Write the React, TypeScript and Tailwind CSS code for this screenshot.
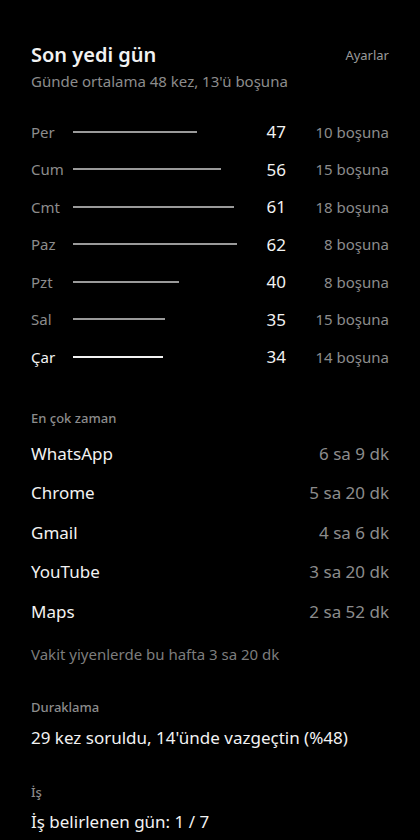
const days = [
  { day: "Per", count: 47, wasted: 10 },
  { day: "Cum", count: 56, wasted: 15 },
  { day: "Cmt", count: 61, wasted: 18 },
  { day: "Paz", count: 62, wasted: 8 },
  { day: "Pzt", count: 40, wasted: 8 },
  { day: "Sal", count: 35, wasted: 15 },
  { day: "Çar", count: 34, wasted: 14, today: true },
];

const apps = [
  { name: "WhatsApp", time: "6 sa 9 dk" },
  { name: "Chrome", time: "5 sa 20 dk" },
  { name: "Gmail", time: "4 sa 6 dk" },
  { name: "YouTube", time: "3 sa 20 dk" },
  { name: "Maps", time: "2 sa 52 dk" },
];

export default function App() {
  return (
    <div
      className="min-h-[840px] w-[420px] bg-black px-[31px] pt-[44px] pb-10 text-[#f2f2f2]"
      style={{ fontFamily: '"Noto Sans", "Open Sans", sans-serif' }}
    >
      <div className="flex items-center justify-between">
        <h1 className="text-[20px] leading-[22px] font-semibold">Son yedi gün</h1>
        <button type="button" className="text-[13px] leading-[22px] text-[#9a9a9a]">
          Ayarlar
        </button>
      </div>
      <p className="mt-[5px] text-[15px] leading-[20px] text-[#8c8c8c]">
        Günde ortalama 48 kez, 13'ü boşuna
      </p>

      <div className="mt-[22px]">
        {days.map((d) => (
          <div key={d.day} className="flex h-[37.5px] items-center">
            <span
              className={`w-[42px] text-[15px] ${d.today ? "text-[#f2f2f2]" : "text-[#8c8c8c]"}`}
            >
              {d.day}
            </span>
            <div className="flex-1">
              <div
                className={`h-[2px] ${d.today ? "bg-[#f2f2f2]" : "bg-[#9a9a9a]"}`}
                style={{ width: `${d.count * 2.64}px` }}
              />
            </div>
            <span className="w-[40px] text-right text-[17px] text-[#f2f2f2]">{d.count}</span>
            <span className="w-[103px] text-right text-[15px] text-[#8c8c8c]">
              {d.wasted} boşuna
            </span>
          </div>
        ))}
      </div>

      <h2 className="mt-[34px] text-[13px] leading-[16px] font-medium text-[#8c8c8c]">En çok zaman</h2>
      <div className="mt-[8px]">
        {apps.map((a) => (
          <div key={a.name} className="flex h-[39.5px] items-center justify-between text-[17px]">
            <span className="text-[#f2f2f2]">{a.name}</span>
            <span className="text-[#8c8c8c]">{a.time}</span>
          </div>
        ))}
      </div>
      <p className="mt-[14px] text-[15px] leading-[18px] text-[#7d7d7d]">
        Vakit yiyenlerde bu hafta 3 sa 20 dk
      </p>

      <h2 className="mt-[36px] text-[13px] leading-[16px] font-medium text-[#8c8c8c]">Duraklama</h2>
      <p className="mt-[12px] text-[17px] leading-[22px]">29 kez soruldu, 14'ünde vazgeçtin (%48)</p>

      <h2 className="mt-[35px] text-[13px] leading-[16px] font-medium text-[#8c8c8c]">İş</h2>
      <p className="mt-[11px] text-[17px] leading-[22px]">İş belirlenen gün: 1 / 7</p>
    </div>
  );
}
